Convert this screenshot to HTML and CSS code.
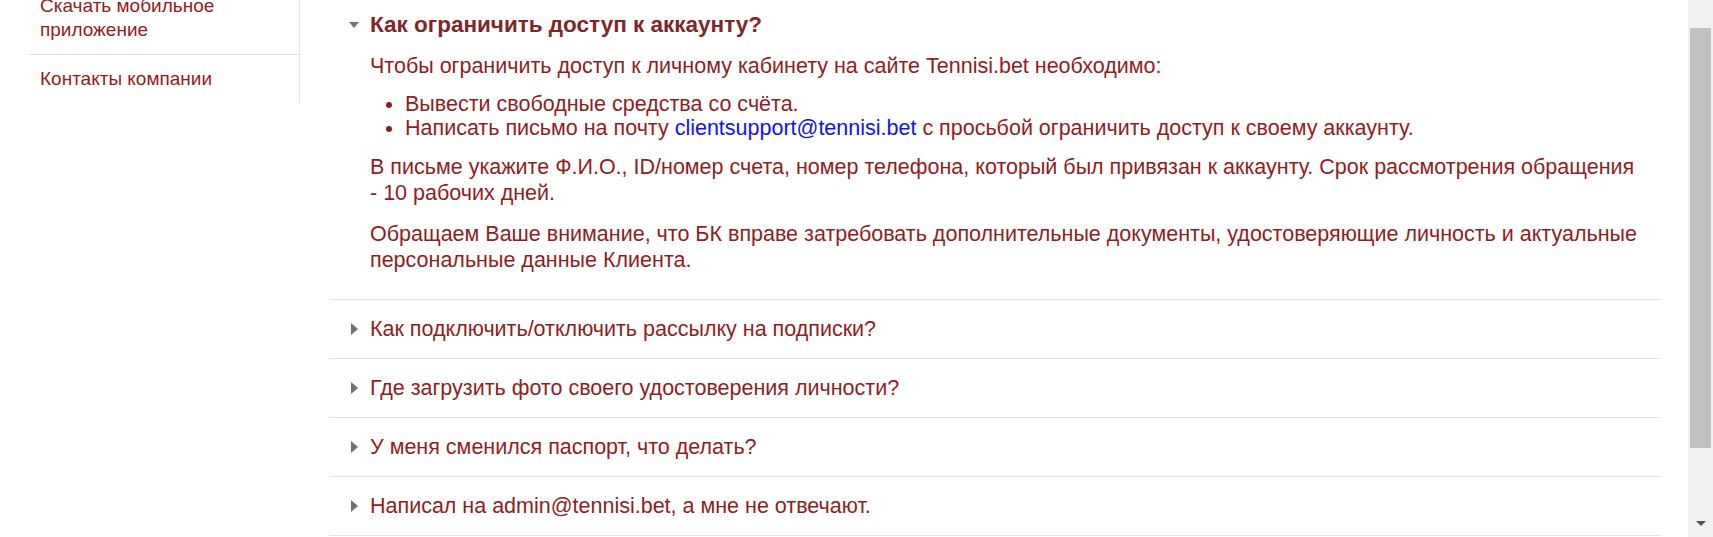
FILE: index.html
```html
<!DOCTYPE html>
<html lang="ru">
<head>
<meta charset="utf-8">
<title>FAQ</title>
<link rel="stylesheet" href="styles.css">
</head>
<body>
<div class="page">
  <div class="viewport">
    <nav class="sidebar">
      <a class="side-item" href="#">Скачать мобильное<br>приложение</a>
      <a class="side-item" href="#">Контакты компании</a>
    </nav>
    <main class="faq">
      <section class="faq-item open">
        <div class="faq-head"><span class="arrow down"></span><span class="q">Как ограничить доступ к аккаунту?</span></div>
        <div class="faq-body">
          <p>Чтобы ограничить доступ к личному кабинету на сайте Tennisi.bet необходимо:</p>
          <ul>
            <li>Вывести свободные средства со счёта.</li>
            <li>Написать письмо на почту <a class="link" href="#">clientsupport@tennisi.bet</a> с просьбой ограничить доступ к своему аккаунту.</li>
          </ul>
          <p>В письме укажите Ф.И.О., ID/номер счета, номер телефона, который был привязан к аккаунту. Срок рассмотрения обращения - 10 рабочих дней.</p>
          <p class="last">Обращаем Ваше внимание, что БК вправе затребовать дополнительные документы, удостоверяющие личность и актуальные персональные данные Клиента.</p>
        </div>
      </section>
      <section class="faq-item">
        <div class="faq-head"><span class="arrow right"></span><span class="q">Как подключить/отключить рассылку на подписки?</span></div>
      </section>
      <section class="faq-item">
        <div class="faq-head"><span class="arrow right"></span><span class="q">Где загрузить фото своего удостоверения личности?</span></div>
      </section>
      <section class="faq-item">
        <div class="faq-head"><span class="arrow right"></span><span class="q">У меня сменился паспорт, что делать?</span></div>
      </section>
      <section class="faq-item">
        <div class="faq-head"><span class="arrow right"></span><span class="q">Написал на admin@tennisi.bet, а мне не отвечают.</span></div>
      </section>
    </main>
  </div>
  <div class="scrollbar">
    <div class="sb-space"></div>
    <div class="sb-thumb"></div>
    <div class="sb-rest"><span class="sb-arrow"></span></div>
  </div>
</div>
</body>
</html>
```
FILE: styles.css
```css
html, body {
  margin: 0;
  padding: 0;
  background: #ffffff;
  overflow: hidden;
}
body {
  font-family: "Liberation Sans", Arial, sans-serif;
  color: #921c23;
}
.page {
  display: flex;
  height: 537px;
  overflow: hidden;
}
.viewport {
  flex: 1;
  display: flex;
  align-items: flex-start;
  padding-left: 29px;
  gap: 29px;
  margin-top: -18px;
}
.sidebar {
  width: 271px;
  box-sizing: border-box;
  border-right: 1px solid #e3e3e3;
  display: flex;
  flex-direction: column;
  flex-shrink: 0;
}
.side-item {
  display: block;
  padding: 12px 0 12px 11px;
  font-size: 19px;
  line-height: 24px;
  color: #921c23;
  text-decoration: none;
}
.side-item + .side-item {
  border-top: 1px solid #e3e3e3;
}
.faq {
  width: 1332px;
  padding-top: 14px;
}
.faq-item {
  border-bottom: 1px solid #e3e3e3;
}
.faq-head {
  display: flex;
  align-items: center;
  padding: 17px 0 17px 19px;
  line-height: 24px;
  font-size: 21.5px;
}
.faq-item.open .faq-head {
  padding-bottom: 16px;
}
.arrow {
  width: 12px;
  height: 12px;
  margin-right: 10px;
  display: flex;
  align-items: center;
  justify-content: center;
  flex-shrink: 0;
}
.arrow.down::before {
  content: "";
  border-left: 5.5px solid transparent;
  border-right: 5.5px solid transparent;
  border-top: 6px solid #757575;
}
.arrow.right::before {
  content: "";
  border-top: 6px solid transparent;
  border-bottom: 6px solid transparent;
  border-left: 7px solid #707070;
}
.faq-item.open .q {
  font-weight: bold;
  font-size: 22.5px;
  color: #80262a;
}
.faq-body {
  padding: 0 20px 26px 41px;
  font-size: 21.5px;
  line-height: 26px;
}
.faq-body p {
  margin: 0;
}
.faq-body ul {
  margin: 13px 0 14px 0;
  padding-left: 35px;
  line-height: 24px;
}
.faq-body p.last {
  margin-top: 15px;
}
.link {
  color: #1010ff;
  text-decoration: none;
}
.scrollbar {
  width: 25px;
  flex-shrink: 0;
  background: #f1f1f1;
  display: flex;
  flex-direction: column;
  align-items: center;
}
.sb-space {
  height: 28px;
}
.sb-thumb {
  width: 21px;
  height: 420px;
  background: #c1c1c1;
}
.sb-rest {
  flex: 1;
  display: flex;
  align-items: flex-end;
  justify-content: center;
  padding-bottom: 11px;
}
.sb-arrow {
  width: 0;
  height: 0;
  border-left: 5px solid transparent;
  border-right: 5px solid transparent;
  border-top: 5px solid #505050;
}
```
